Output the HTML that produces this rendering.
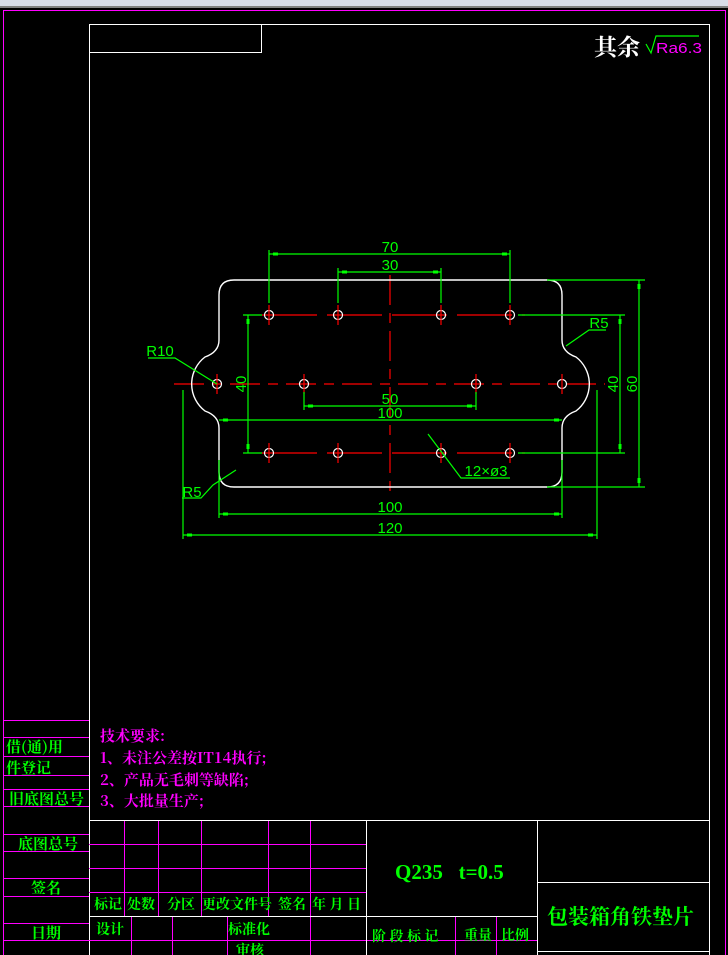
<!DOCTYPE html>
<html><head><meta charset="utf-8"><style>
html,body{margin:0;padding:0;background:#000;width:728px;height:955px;overflow:hidden}
svg{display:block}
</style></head><body>
<svg width="728" height="955" viewBox="0 0 728 955" xmlns="http://www.w3.org/2000/svg" font-family="'Liberation Sans','Noto Sans CJK SC',sans-serif">
<rect x="0" y="0" width="728" height="955" fill="#000"/>
<rect x="0" y="0" width="728" height="6" fill="#d8dce8"/>
<rect x="0" y="6" width="728" height="2" fill="#808080"/>
<rect x="3.5" y="10.5" width="722" height="950" fill="none" stroke="#f0f" stroke-width="1"/>
<rect x="89.5" y="24.5" width="620" height="940" fill="none" stroke="#fff" stroke-width="1"/>
<rect x="89.5" y="24.5" width="172" height="28" fill="none" stroke="#fff" stroke-width="1"/>
<text x="594" y="55" fill="#fff" font-size="23" font-weight="bold" font-family="'Noto Serif CJK SC',serif">其余</text>
<path d="M646,44 L651,53 L656,36 L699,36" fill="none" stroke="#0f0" stroke-width="1.2"/>
<text x="656" y="53" fill="#f0f" font-size="15" textLength="46" lengthAdjust="spacingAndGlyphs">Ra6.3</text>

<g stroke="#f00" stroke-width="1.2">
<line x1="174" y1="384" x2="605" y2="384" stroke-dasharray="30,8,10,8"/>
<line x1="390" y1="275" x2="390" y2="493" stroke-dasharray="30,8,10,8"/>
<line x1="262" y1="315" x2="525" y2="315" stroke-dasharray="55,10"/>
<line x1="262" y1="453" x2="525" y2="453" stroke-dasharray="55,10"/>
</g>
<g fill="none" stroke="#fff" stroke-width="1.2">
<circle cx="269" cy="315" r="4.5"/><circle cx="338" cy="315" r="4.5"/><circle cx="441" cy="315" r="4.5"/><circle cx="510" cy="315" r="4.5"/>
<circle cx="269" cy="453" r="4.5"/><circle cx="338" cy="453" r="4.5"/><circle cx="441" cy="453" r="4.5"/><circle cx="510" cy="453" r="4.5"/>
<circle cx="217" cy="384" r="4.5"/><circle cx="304" cy="384" r="4.5"/><circle cx="476" cy="384" r="4.5"/><circle cx="562" cy="384" r="4.5"/>
</g>
<g stroke="#f00" stroke-width="1.2">
<path d="M269,305v20M338,305v20M441,305v20M510,305v20M269,443v20M338,443v20M441,443v20M510,443v20M217,374v20M304,374v20M476,374v20M562,374v20"/>
</g>
<path d="M234,280 H547 Q562,280 562,295 V340 Q562,352 576,357 A34,34 0 0 1 576,411 Q562,416 562,428 V472 Q562,487 547,487 H234 Q219,487 219,472 V428 Q219,416 205,411 A34,34 0 0 1 205,357 Q219,352 219,340 V295 Q219,280 234,280 Z" fill="none" stroke="#fff" stroke-width="1.4"/>

<g stroke="#0f0" stroke-width="1.2" fill="none">
<path d="M269,250V303M510,250V303M338,268V303M441,268V303"/>
<path d="M269,254H510M338,272H441"/>
<path d="M304,392V410M476,392V410M304,406H476"/>
<path d="M219,420H562"/>
<path d="M219,460V518M562,460V518M219,514H562"/>
<path d="M183,390V539M597,390V539M183,535H597"/>
<path d="M243,315H262M243,453H262M248,315V453"/>
<path d="M518,315H625M518,453H625M620,315V453"/>
<path d="M547,280H645M547,487H645M639,280V487"/>
<path d="M148,358H175L217,384"/>
<path d="M566,346L589,330H606"/>
<path d="M236,470L213,485L201,498H182"/>
<path d="M428,434L461,478H510"/>
</g>
<g fill="#0f0">
<rect x="273" y="252.5" width="5" height="3"/><rect x="502" y="252.5" width="5" height="3"/>
<rect x="342" y="270.5" width="5" height="3"/><rect x="433" y="270.5" width="5" height="3"/>
<rect x="308" y="404.5" width="5" height="3"/><rect x="467" y="404.5" width="5" height="3"/>
<rect x="223" y="418.5" width="5" height="3"/><rect x="554" y="418.5" width="5" height="3"/>
<rect x="223" y="512.5" width="5" height="3"/><rect x="554" y="512.5" width="5" height="3"/>
<rect x="187" y="533.5" width="5" height="3"/><rect x="588" y="533.5" width="5" height="3"/>
<rect x="246.5" y="319" width="3" height="5"/><rect x="246.5" y="444" width="3" height="5"/>
<rect x="618.5" y="319" width="3" height="5"/><rect x="618.5" y="444" width="3" height="5"/>
<rect x="637.5" y="284" width="3" height="5"/><rect x="637.5" y="478" width="3" height="5"/>
</g>
<g fill="#0f0" font-size="15" text-anchor="middle">
<text x="390" y="252">70</text>
<text x="390" y="270">30</text>
<text x="390" y="404">50</text>
<text x="390" y="418">100</text>
<text x="390" y="512">100</text>
<text x="390" y="533">120</text>
<text x="160" y="356">R10</text>
<text x="599" y="328">R5</text>
<text x="192" y="497">R5</text>
<text x="486" y="476">12×ø3</text>
<text transform="translate(246,384) rotate(-90)">40</text>
<text transform="translate(618,384) rotate(-90)">40</text>
<text transform="translate(637,384) rotate(-90)">60</text>
</g>

<g stroke="#f0f" stroke-width="1">
<path d="M3,720.5H89M3,737.5H89M3,756.5H89M3,775.5H89M3,789.5H89M3,806.5H89M3,834.5H89M3,851.5H89M3,878.5H89M3,896.5H89M3,923.5H89M3,940.5H89"/>
</g>
<g fill="#0f0" font-size="15" font-weight="bold" font-family="'Noto Serif CJK SC',serif">
<text x="6" y="752">借(通)用</text>
<text x="6" y="773">件登记</text>
<text x="9" y="804">旧底图总号</text>
<text x="18" y="849">底图总号</text>
<text x="31" y="893">签名</text>
<text x="31" y="938">日期</text>
</g>
<g fill="#f0f" font-size="15" font-weight="bold" font-family="'Noto Serif CJK SC',serif">
<text x="100" y="741">技术要求:</text>
<text x="100" y="763">1、未注公差按IT14执行;</text>
<text x="100" y="785">2、产品无毛刺等缺陷;</text>
<text x="100" y="806">3、大批量生产;</text>
</g>
<g stroke="#f0f" stroke-width="1">
<path d="M89,844.5H366M89,868.5H366M89,892.5H366M89,940.5H366"/>
<path d="M124.5,820V916M158.5,820V916M201.5,820V916M268.5,820V916M310.5,820V916"/>
<path d="M131.5,916V955M172.5,916V955M227.5,916V955M310.5,916V955"/>
<path d="M455.5,916V955M496.5,916V955M366,940.5H537"/>
</g>
<g stroke="#fff" stroke-width="1">
<path d="M89,820.5H709M89,916.5H366M366.5,820V955M537.5,820V955M537,882.5H709M366,916.5H537M537,951.5H709"/>
</g>
<g fill="#0f0" font-size="14" font-weight="bold" font-family="'Noto Serif CJK SC',serif">
<text x="94" y="909">标记</text>
<text x="127" y="909">处数</text>
<text x="167" y="909">分区</text>
<text x="202" y="909">更改文件号</text>
<text x="278" y="909">签名</text>
<text x="312" y="909">年 月 日</text>
<text x="96" y="934">设计</text>
<text x="228" y="934">标准化</text>
<text x="236" y="955">审核</text>
<text x="372" y="941">阶 段 标 记</text>
<text x="464" y="940">重量</text>
<text x="501" y="940">比例</text>
</g>
<text x="395" y="879" fill="#0f0" font-size="21" font-weight="bold" font-family="'Liberation Serif',serif">Q235&#160;&#160;&#160;t=0.5</text>
<text x="547" y="924" fill="#0f0" font-size="21" font-weight="bold" font-family="'Noto Serif CJK SC',serif">包装箱角铁垫片</text>
</svg>
</body></html>
